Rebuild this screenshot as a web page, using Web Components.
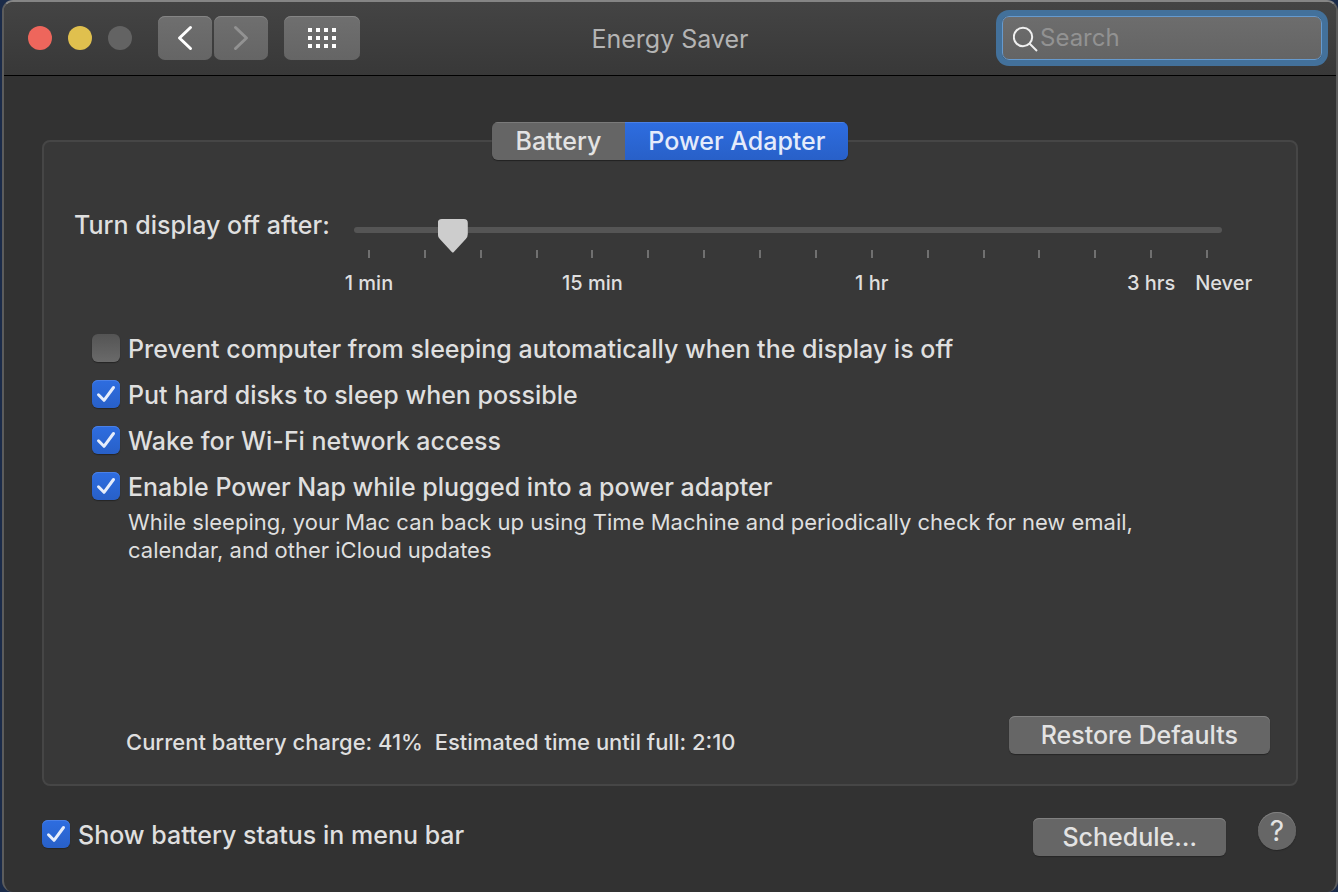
<!DOCTYPE html>
<html lang="en">
<head>
<meta charset="utf-8">
<title>Energy Saver</title>
<style>
  html { background: #1b2b49; }
  body { margin: 0; padding-left: 2px; font-family: Inter, "Liberation Sans", sans-serif; font-size: 25px; font-weight: 500; line-height: 28px; color: #dfdfdf; }
</style>
</head>
<body>
<energy-window></energy-window>

<template id="t-window">
  <style>
    :host { display: flex; flex-direction: column; box-sizing: border-box; min-height: 100vh; background: #323232;
      border: 2px solid #5c5c5c; border-top-color: #858585; border-bottom: 0; border-radius: 11px; overflow: hidden; }
    main { flex: 1; display: flex; flex-direction: column; padding: 46px 38px 36px; }
    pref-tabs { align-self: center; margin-bottom: -20px; z-index: 1; }
    .panel { flex: 1; display: flex; flex-direction: column; box-sizing: border-box; min-height: 600px;
      border: 2px solid #464646; border-radius: 8px; background: #383838; padding: 66px 26px 28px 30px; }
    .checks { display: flex; flex-direction: column; gap: 18px; padding: 37px 0 0 18px; }
    .note { margin: 0; padding: 8px 54px 0; font-size: 22px; font-weight: 400; max-width: 1030px; }
    .status { margin-top: auto; display: flex; justify-content: space-between; align-items: flex-start; }
    .status p { margin: 0; padding: 12px 0 0 52px; font-size: 22px; white-space: pre; }
    .status pref-button { --button-padding: 32px; }
    footer { display: flex; align-items: flex-start; padding-top: 26px; }
    footer pref-check { margin-top: 8px; margin-right: auto; }
    footer pref-button { margin-top: 6px; margin-right: 32px; }
    footer help-button { margin-right: 2px; }
  </style>
  <title-bar>Energy Saver</title-bar>
  <main>
    <pref-tabs></pref-tabs>
    <section class="panel">
      <time-slider>Turn display off after:</time-slider>
      <div class="checks">
        <pref-check>Prevent computer from sleeping automatically when the display is off</pref-check>
        <pref-check checked>Put hard disks to sleep when possible</pref-check>
        <pref-check checked>Wake for Wi-Fi network access</pref-check>
        <pref-check checked>Enable Power Nap while plugged into a power adapter</pref-check>
      </div>
      <p class="note">While sleeping, your Mac can back up using Time Machine and periodically check for new email, calendar, and other iCloud updates</p>
      <div class="status">
        <p>Current battery charge: 41%  Estimated time until full: 2:10</p>
        <pref-button>Restore Defaults</pref-button>
      </div>
    </section>
    <footer>
      <pref-check checked>Show battery status in menu bar</pref-check>
      <pref-button>Schedule…</pref-button>
      <help-button></help-button>
    </footer>
  </main>
</template>

<template id="t-titlebar">
  <style>
    :host { display: grid; grid-template-columns: 1fr auto 1fr; align-items: center; box-sizing: border-box; height: 74px;
      padding: 0 14px 2px; background: linear-gradient(#444444, #383838); border-bottom: 1px solid #000; }
    .left { display: flex; align-items: center; padding-left: 10px; }
    .lights { display: flex; gap: 16px; margin-right: 26px; }
    .lights button { width: 24px; height: 24px; padding: 0; border: 0; border-radius: 50%; background: #636363; }
    .lights .close { background: #ee665c; }
    .lights .min { background: #e0c04e; }
    .nav { display: flex; gap: 2px; margin-right: 16px; }
    .tool { display: grid; place-items: center; box-sizing: border-box; width: 54px; height: 44px; padding: 0; border: 0; border-radius: 7px;
      background: linear-gradient(#6f6f6f, #656565); box-shadow: inset 0 1px #858585; }
    .tool.wide { width: 76px; }
    h1 { margin: 0; padding-top: 2px; font-size: 25px; font-weight: 400; color: #b4b4b4; }
    .search { justify-self: end; display: flex; align-items: center; gap: 1px; box-sizing: border-box; width: 320px; height: 44px; padding-left: 10px;
      border: 1px solid #669ace; border-radius: 7px; background: linear-gradient(#6d6d6d, #646464); box-shadow: 0 0 0 6px #43719b; }
    input { flex: 1; min-width: 0; padding: 0; border: 0; outline: 0; background: none; font: inherit; font-size: 24px; font-weight: 400; color: #fff; }
    input::placeholder { color: #929292; opacity: 1; }
    svg { display: block; }
  </style>
  <div class="left">
    <div class="lights">
      <button class="close" aria-label="Close"></button><button class="min" aria-label="Minimize"></button><button aria-label="Zoom" disabled></button>
    </div>
    <div class="nav">
      <button class="tool" aria-label="Back"><svg width="54" height="44" fill="none" stroke="#fff" stroke-width="3" stroke-linecap="round" stroke-linejoin="round"><path d="M32.500 11.500L21.500 22L32.500 32.500"/></svg></button>
      <button class="tool" aria-label="Forward" disabled><svg width="54" height="44" fill="none" stroke="#929292" stroke-width="3" stroke-linecap="round" stroke-linejoin="round"><path d="M21.500 11.500L32.500 22L21.500 32.500"/></svg></button>
    </div>
    <button class="tool wide" aria-label="Show All"><svg width="76" height="44" fill="#fff"><path d="M24 12h4v4h-4zM32 12h4v4h-4zM40 12h4v4h-4zM48 12h4v4h-4zM24 20h4v4h-4zM32 20h4v4h-4zM40 20h4v4h-4zM48 20h4v4h-4zM24 28h4v4h-4zM32 28h4v4h-4zM40 28h4v4h-4zM48 28h4v4h-4z"/></svg></button>
  </div>
  <h1><slot></slot></h1>
  <label class="search">
    <svg width="26" height="28" viewBox="0 0 26 28" fill="none" stroke="#efefef" stroke-width="2"><circle cx="10" cy="13" r="9.200"/><path d="M16.500 19.500L24 27"/></svg>
    <input type="search" placeholder="Search" aria-label="Search">
  </label>
</template>

<template id="t-tabs">
  <style>
    :host { display: flex; border-radius: 6px; overflow: hidden; box-shadow: 0 1px 1px #222; }
    button { height: 38px; padding: 0 24px; border: 0; font: inherit; color: #e3e3e3; background: #656565; box-shadow: inset 0 1px #7a7a7a; }
    button[aria-selected="true"] { padding: 0 23px; color: #e4ebfb; background: linear-gradient(#2e6de0, #2860c8); box-shadow: inset 0 1px #4a80e6; }
  </style>
  <button role="tab" aria-selected="false">Battery</button><button role="tab" aria-selected="true">Power Adapter</button>
</template>

<template id="t-slider">
  <style>
    :host { display: grid; grid-template-columns: 267px 1fr; padding-right: 34px; }
    label { line-height: 34px; white-space: nowrap; }
    .scale { min-width: 0; padding: 11px 14px 0 13px; }
    input { appearance: none; -webkit-appearance: none; display: block; width: 100%; height: 22px; margin: 0; background: none; }
    input::-webkit-slider-runnable-track { height: 6px; border-radius: 3px; background: #555; }
    input::-webkit-slider-thumb { -webkit-appearance: none; width: 30px; height: 34px; margin-top: -8px; border: 0; background: #cdcdcd; border-radius: 0;
      clip-path: path("M0 4Q0 0 4 0H26Q30 0 30 4V15Q30 18 28 20L16 33Q15 34 14 33L2 20Q0 18 0 15Z"); }
    .ticks, .names { display: grid; grid-template-columns: repeat(16, minmax(0, 1fr)); margin: 0 -13px; }
    .ticks { padding-top: 9px; }
    .ticks i { justify-self: center; width: 2px; height: 8px; background: #707070; }
    .names { padding-top: 11px; font-size: 20px; }
    .names span { justify-self: center; white-space: nowrap; }
    .names span.last { justify-self: start; padding-left: 16px; }
  </style>
  <label for="r"><slot></slot></label>
  <div class="scale">
    <input id="r" type="range" min="0" max="15" step="0.5" value="1.5">
    <div class="ticks"></div>
    <div class="names">
      <span style="grid-column:1">1 min</span><span style="grid-column:5">15 min</span><span style="grid-column:10">1 hr</span><span style="grid-column:15">3 hrs</span><span class="last" style="grid-column:16">Never</span>
    </div>
  </div>
</template>

<template id="t-check">
  <style>
    :host { display: block; }
    label { display: flex; align-items: flex-start; gap: 8px; min-height: 28px; margin-bottom: -1px; }
    .text { padding-top: 1px; }
    .box { display: grid; width: 28px; height: 28px; flex: none; }
    input, svg { grid-area: 1 / 1; }
    input { appearance: none; -webkit-appearance: none; margin: 0; border-radius: 6px; background: linear-gradient(#545454, #6a6a6a); box-shadow: 0 1px 1px #252525; }
    input:checked { background: linear-gradient(#2e6de0, #2860c8); box-shadow: 0 1px 1px #252525, inset 0 1px #4a80e6; }
    svg { visibility: hidden; pointer-events: none; z-index: 1; }
    input:checked + svg { visibility: visible; }
  </style>
  <label><span class="box"><input type="checkbox"><svg width="28" height="28" fill="none" stroke="#e6edfb" stroke-width="3" stroke-linecap="round" stroke-linejoin="round"><path d="M6.500 14.800L12 20.300L21.500 7.500"/></svg></span><span class="text"><slot></slot></span></label>
</template>

<template id="t-button">
  <style>
    :host { display: block; }
    button { display: block; height: 38px; padding: 0 var(--button-padding, 29px); border: 0; border-radius: 6px; font: inherit; color: #e3e3e3; background: #666; box-shadow: inset 0 1px #808080, 0 1px 1px #262626; }
  </style>
  <button><slot></slot></button>
</template>

<template id="t-help">
  <style>
    :host { display: block; }
    button { display: block; width: 38px; height: 38px; padding: 0; border: 0; border-radius: 50%; font: inherit; font-size: 28px; font-weight: 400; color: #e3e3e3; background: #666; box-shadow: inset 0 1px #808080, 0 1px 1px #262626; }
  </style>
  <button aria-label="Help">?</button>
</template>

<script>
  class TemplateElement extends HTMLElement {
    constructor() {
      super();
      const root = this.attachShadow({ mode: "open" });
      root.append(document.getElementById(this.constructor.template).content.cloneNode(true));
    }
  }
  class PrefCheck extends TemplateElement {
    static template = "t-check";
    connectedCallback() { this.shadowRoot.querySelector("input").checked = this.hasAttribute("checked"); }
  }
  class TimeSlider extends TemplateElement {
    static template = "t-slider";
    connectedCallback() {
      const ticks = this.shadowRoot.querySelector(".ticks");
      for (let n = 0; n < 16; n++) ticks.append(document.createElement("i"));
    }
  }
  customElements.define("title-bar", class extends TemplateElement { static template = "t-titlebar"; });
  customElements.define("pref-tabs", class extends TemplateElement { static template = "t-tabs"; });
  customElements.define("time-slider", TimeSlider);
  customElements.define("pref-check", PrefCheck);
  customElements.define("pref-button", class extends TemplateElement { static template = "t-button"; });
  customElements.define("help-button", class extends TemplateElement { static template = "t-help"; });
  customElements.define("energy-window", class extends TemplateElement { static template = "t-window"; });
</script>
</body>
</html>
